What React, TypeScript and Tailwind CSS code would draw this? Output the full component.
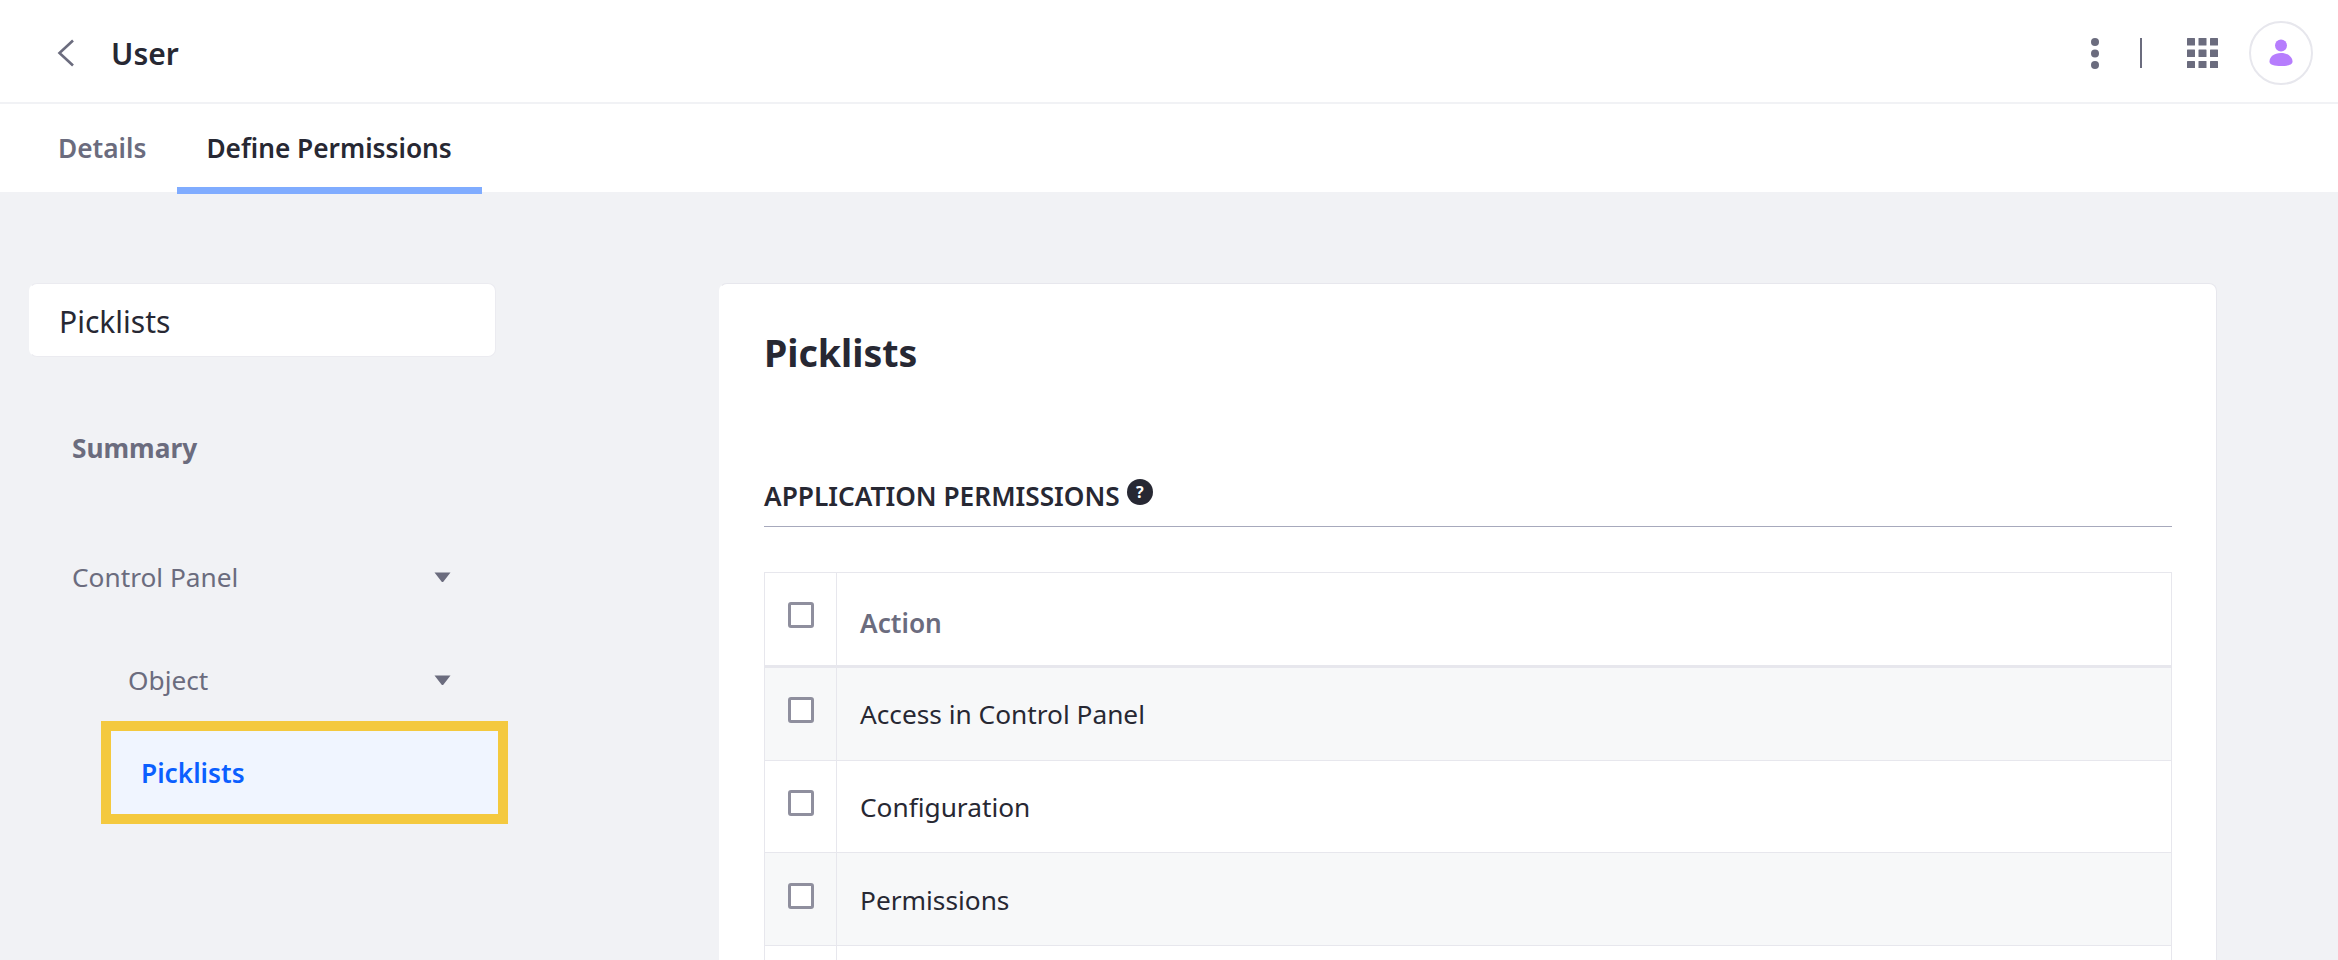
import React from "react";

function Caret() {
  return (
    <svg width="17" height="10" viewBox="0 0 17 10" className="block">
      <path d="M0.5 0.5H16.500L9.500 9.500a1.200 1.200 0 0 1-2 0Z" fill="#6b6c7e" />
    </svg>
  );
}

function Checkbox() {
  return <span className="block w-[26px] h-[26px] rounded-[3px] border-[3px] border-[#8f8f9e] bg-white" />;
}

function Row({ label, shaded, height, pad, textPad }: { label: string; shaded: boolean; height: string; pad: string; textPad: string }) {
  return (
    <div className={`flex border-b border-[#e7e7ed] ${height} ${shaded ? "bg-[#f7f8f9]" : "bg-white"}`}>
      <div className={`w-[72px] shrink-0 border-r border-[#e7e7ed] pl-[23px] ${pad}`}>
        <Checkbox />
      </div>
      <div className={`flex-1 pl-[23px] ${textPad} text-[26.25px] leading-[32px] text-[#272833]`}>{label}</div>
    </div>
  );
}

export default function App() {
  return (
    <div className="h-[960px] overflow-hidden flex flex-col bg-[#f1f2f5] font-['Noto_Sans','Liberation_Sans',sans-serif]">
      <header className="h-[104px] shrink-0 bg-white border-b-2 border-[#f1f2f5] flex items-center pt-[4px] pl-[56px] pr-[25px]">
        <svg width="20" height="28" viewBox="0 0 20 28" className="mr-[35px]" fill="none">
          <path d="M17 1.500 3.500 14 17 26.500" stroke="#6b6c7e" strokeWidth="2.600" />
        </svg>
        <h1 className="text-[30px] leading-[40px] font-semibold text-[#272833] pt-[1px]">User</h1>
        <div className="ml-auto flex items-center">
          <svg width="8" height="31" viewBox="0 0 8 31" className="mr-[41px]" fill="#6b6c7e">
            <circle cx="4" cy="4" r="4" />
            <circle cx="4" cy="15.500" r="4" />
            <circle cx="4" cy="27" r="4" />
          </svg>
          <div className="w-[2px] h-[30px] bg-[#6b6c7e] mr-[45px]" />
          <svg width="31" height="30" viewBox="0 0 31 30" className="mr-[31px]" fill="#6b6c7e">
            {[0, 11.5, 23].map((y) =>
              [0, 11.5, 23].map((x) => <rect key={`${x}-${y}`} x={x} y={y} width="8" height="7.500" rx="0.500" />)
            )}
          </svg>
          <div className="w-[64px] h-[64px] rounded-full border-2 border-[#e7e7ed] bg-white flex items-center justify-center">
            <svg width="24" height="28" viewBox="0 0 24 28" fill="#b67dfd">
              <circle cx="12" cy="6.500" r="6" />
              <path d="M12 14c7 0 11.500 4 11.500 8.500 0 3.500-5 4.500-11.500 4.500S.5 26 .5 22.500C.5 18 5 14 12 14Z" />
            </svg>
          </div>
        </div>
      </header>

      <nav className="h-[88px] shrink-0 bg-white flex pl-[28px] relative z-10">
        <div className="px-[30px] h-[90px] pt-[28px] text-[26.25px] leading-[32px] font-semibold text-[#6b6c7e]">Details</div>
        <div className="ml-[1px] pl-[29px] pr-[30px] h-[90px] pt-[28px] text-[26.25px] leading-[32px] font-semibold text-[#272833] border-b-[7px] border-[#80acff]">
          Define Permissions
        </div>
      </nav>

      <main className="flex-1 flex items-start pt-[91px] pl-[29px]">
        <aside className="w-[467px] shrink-0">
          <div className="h-[74px] bg-white border border-[#ebebf0] border-l-white rounded-[8px] pl-[29px] pt-[20px] text-[30px] leading-[36px] text-[#272833]">
            Picklists
          </div>
          <div className="pl-[43px] pt-[75px] text-[26.25px] leading-[32px] font-bold text-[#6b6c7e]">Summary</div>
          <div className="pl-[43px] pr-[45px] pt-[97px] flex items-center justify-between text-[26.25px] leading-[32px] text-[#6b6c7e]">
            <span>Control Panel</span>
            <Caret />
          </div>
          <div className="pl-[99px] pr-[45px] pt-[71px] flex items-center justify-between text-[26.25px] leading-[32px] text-[#6b6c7e]">
            <span>Object</span>
            <Caret />
          </div>
          <div className="ml-[72px] mt-[25px] w-[407px] h-[103px] border-[10px] border-[#f4c93f] bg-[#f0f5ff] pl-[30px] pt-[26px] text-[26.25px] leading-[32px] font-semibold text-[#0b5fff]">
            Picklists
          </div>
        </aside>

        <section className="ml-[223px] w-[1498px] h-[800px] bg-white border border-[#e7e7ed] border-l-white rounded-[8px] px-[44px]">
          <h2 className="pt-[45px] text-[37.5px] leading-[48px] font-bold text-[#272833]">Picklists</h2>
          <div className="mt-[103px] pb-[14px] border-b border-[#a7a9bc] flex text-[26.25px] leading-[32px] font-semibold text-[#272833]">
            <span>APPLICATION PERMISSIONS</span>
            <span className="ml-[7px] -mt-[1px] w-[26px] h-[26px] rounded-full bg-[#272833] text-white text-[16px] leading-[26px] font-bold text-center">?</span>
          </div>
          <div className="mt-[45px] border border-[#e7e7ed]">
            <div className="flex h-[95px] border-b-[3px] border-[#e7e7ed] bg-white">
              <div className="w-[72px] shrink-0 border-r border-[#e7e7ed] pl-[23px] pt-[29px]">
                <Checkbox />
              </div>
              <div className="flex-1 pl-[23px] pt-[34px] text-[26.25px] leading-[32px] font-semibold text-[#6b6c7e]">Action</div>
            </div>
            <Row label="Access in Control Panel" shaded height="h-[93px]" pad="pt-[29px]" textPad="pt-[30px]" />
            <Row label="Configuration" shaded={false} height="h-[92px]" pad="pt-[29px]" textPad="pt-[30px]" />
            <Row label="Permissions" shaded height="h-[93px]" pad="pt-[30px]" textPad="pt-[31px]" />
            <Row label="" shaded={false} height="h-[92px]" pad="pt-[29px]" textPad="pt-[30px]" />
          </div>
        </section>
      </main>
    </div>
  );
}
